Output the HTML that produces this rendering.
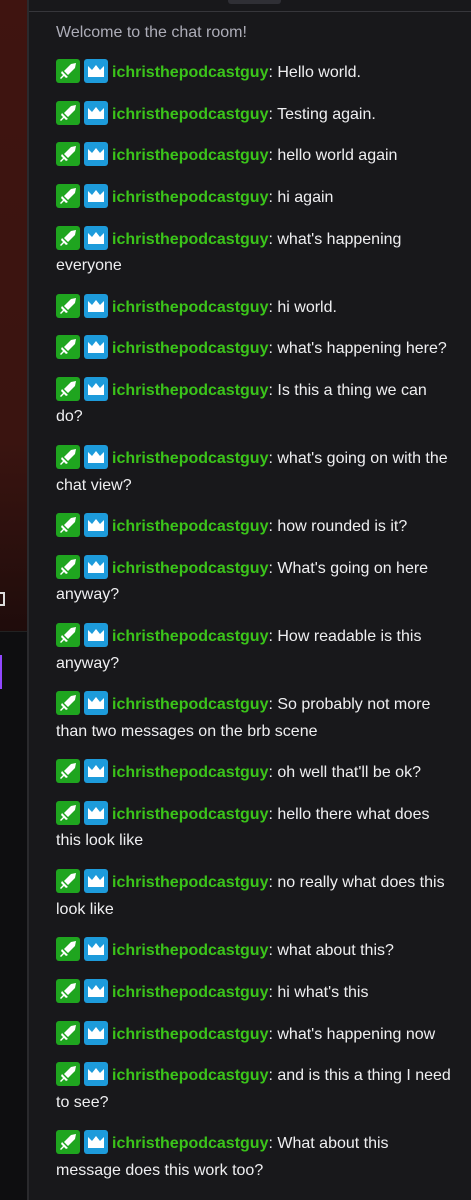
<!DOCTYPE html>
<html><head><meta charset="utf-8"><style>
*{margin:0;padding:0;box-sizing:border-box}
html,body{width:471px;height:1200px;overflow:hidden}
body{background:#18181b;font-family:"Liberation Sans",sans-serif;position:relative}
#left{position:absolute;left:0;top:0;width:27px;height:1200px;background:#0e0e10}
#red{position:absolute;left:0;top:0;width:27px;height:632px;background:linear-gradient(#3f1410 0%,#3a1410 70%,#1f0c0b 100%);border-bottom:1px solid #222}
#purple{position:absolute;left:0;top:655px;width:2px;height:34px;background:#9147ff}
#brk{position:absolute;left:0;top:592px;width:5px;height:14px;border:2px solid #ddd;border-left:none}
#bord{position:absolute;left:27px;top:0;width:2px;height:1200px;background:#2a2a2d}
#topbox{position:absolute;left:228px;top:0;width:53px;height:4px;background:#2f2f35;border-radius:0 0 3px 3px}
#topline{position:absolute;left:29px;top:11px;width:442px;height:1px;background:#36363b}
#chat{position:absolute;left:56px;top:20px;width:410px;color:#efeff1;font-size:16px;line-height:26.5px}
.w{color:#adadb8;margin-bottom:12.5px}
.m{margin-bottom:14.15px;white-space:nowrap}
.b{display:inline-block;width:24px;height:24px;border-radius:3px;vertical-align:-6px;margin-right:4px;position:relative}
.g{background:#1fa51f}
.bl{background:#1d9bdb}
.u{color:#3bc41a;font-weight:bold}
</style></head><body>
<div id="left"><div id="red"></div><div id="brk"></div><div id="purple"></div></div>
<div id="bord"></div>
<div id="topbox"></div><div id="topline"></div>
<svg width="0" height="0" style="position:absolute"><defs>
<symbol id="sw" viewBox="0 0 24 24"><path d="M20 4 L19 9 L12 16 L8 12 L15 5 Z" fill="#fff"/><path d="M6 12 L12 18 L10 19 L8 17 L5 20 L4 19 L7 16 L5 14 Z" fill="#fff"/></symbol>
<symbol id="cr" viewBox="0 0 24 24"><path d="M4 7 L8 11 L12 6 L16 11 L20 7 L20 18 L4 18 Z" fill="#fff"/></symbol>
</defs></svg>
<div id="chat">
<div class="w">Welcome to the chat room!</div>
</div>
<script>
const msgs=["Hello world.","Testing again.","hello world again","hi again","what's happening<br>everyone","hi world.","what's happening here?","Is this a thing we can<br>do?","what's going on with the<br>chat view?","how rounded is it?","What's going on here<br>anyway?","How readable is this<br>anyway?","So probably not more<br>than two messages on the brb scene","oh well that'll be ok?","hello there what does<br>this look like","no really what does this<br>look like","what about this?","hi what's this","what's happening now","and is this a thing I need<br>to see?","What about this<br>message does this work too?"];
let h="";
for(const m of msgs){h+='<div class="m"><span class="b g"><svg width="24" height="24"><use href="#sw"/></svg></span><span class="b bl"><svg width="24" height="24"><use href="#cr"/></svg></span><span class="u">ichristhepodcastguy</span>: '+m+'</div>';}
document.getElementById('chat').innerHTML+=h;
</script>
</body></html>
